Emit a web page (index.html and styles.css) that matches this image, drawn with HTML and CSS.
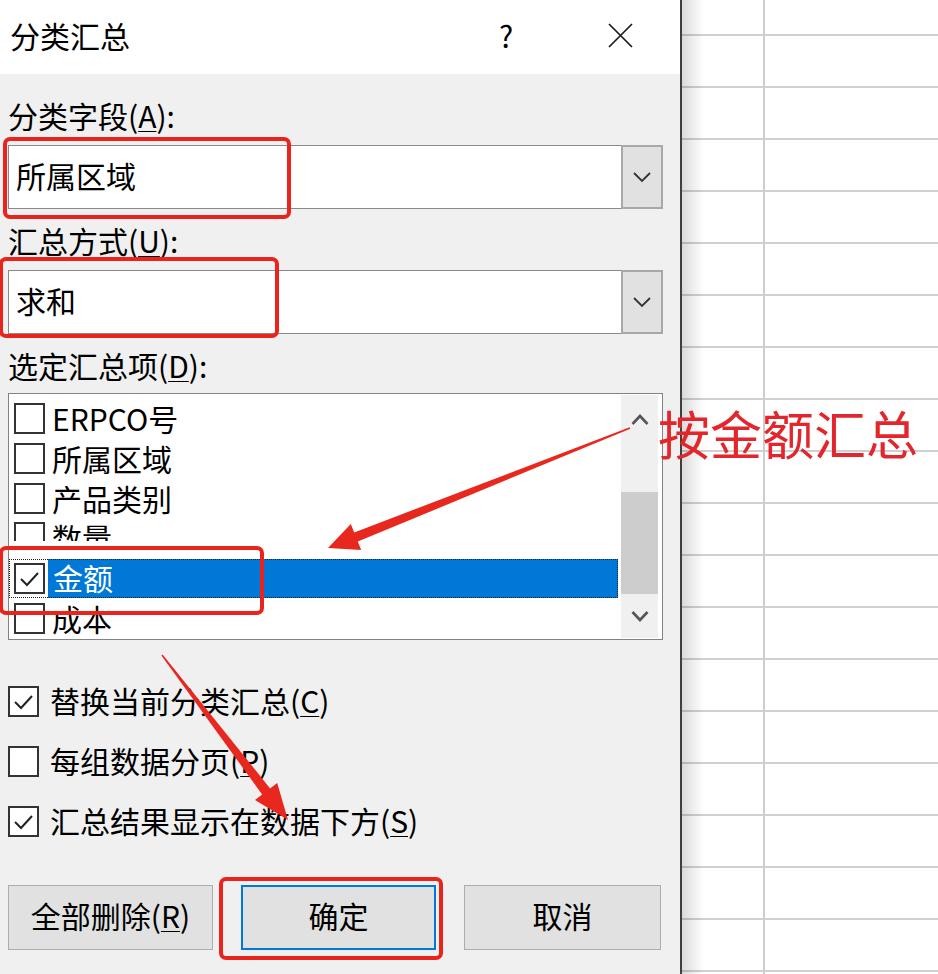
FILE: index.html
```html
<!DOCTYPE html>
<html lang="zh-CN">
<head>
  <meta charset="UTF-8">
  <title>分类汇总</title>
  <link rel="stylesheet" href="styles.css">
</head>
<body>

  <div class="screen">
    <div class="dialog">
      <div class="titlebar">
        <span class="title">分类汇总</span>
        <span class="help">?</span>
        <span class="close">
          <svg width="25" height="25" viewBox="0 0 25 25"><path d="M1 1L24 24M24 1L1 24" stroke="#1a1a1a" stroke-width="1.7" fill="none"/></svg>
        </span>
      </div>

      <div class="content">
        <div class="label first">分类字段(<u>A</u>):</div>
        <div class="combo">
          <span class="value">所属区域</span>
          <span class="drop"><svg width="18" height="12" viewBox="0 0 18 12"><path d="M1 2L9 10L17 2" stroke="#333" stroke-width="1.8" fill="none"/></svg></span>
        </div>

        <div class="label">汇总方式(<u>U</u>):</div>
        <div class="combo">
          <span class="value">求和</span>
          <span class="drop"><svg width="18" height="12" viewBox="0 0 18 12"><path d="M1 2L9 10L17 2" stroke="#333" stroke-width="1.8" fill="none"/></svg></span>
        </div>

        <div class="label">选定汇总项(<u>D</u>):</div>
        <div class="list">
          <div class="items">
            <div class="item"><span class="box"></span><span class="text">ERPCO号</span></div>
            <div class="item"><span class="box"></span><span class="text">所属区域</span></div>
            <div class="item"><span class="box"></span><span class="text">产品类别</span></div>
            <div class="item cut"><span class="box"></span><span class="text">数量</span></div>
            <div class="item current">
              <span class="box"><svg width="27" height="27" viewBox="0 0 27 27"><path d="M5 14L11 20L22 8" stroke="#222" stroke-width="2" fill="none"/></svg></span>
              <span class="text">金额</span>
            </div>
            <div class="item"><span class="box"></span><span class="text">成本</span></div>
          </div>
          <div class="scroll">
            <div class="arrow-up"><svg width="18" height="13" viewBox="0 0 18 13"><path d="M1.5 11L9 3L16.5 11" stroke="#555" stroke-width="2.6" fill="none"/></svg></div>
            <div class="track"><div class="thumb"></div></div>
            <div class="arrow-down"><svg width="18" height="13" viewBox="0 0 18 13"><path d="M1.5 2L9 10L16.5 2" stroke="#555" stroke-width="2.6" fill="none"/></svg></div>
          </div>
        </div>

        <div class="options">
          <div class="option">
            <span class="box"><svg width="27" height="27" viewBox="0 0 27 27"><path d="M5 14L11 20L22 8" stroke="#222" stroke-width="2" fill="none"/></svg></span>
            <span class="text">替换当前分类汇总(<u>C</u>)</span>
          </div>
          <div class="option">
            <span class="box"></span>
            <span class="text">每组数据分页(<u>P</u>)</span>
          </div>
          <div class="option">
            <span class="box"><svg width="27" height="27" viewBox="0 0 27 27"><path d="M5 14L11 20L22 8" stroke="#222" stroke-width="2" fill="none"/></svg></span>
            <span class="text">汇总结果显示在数据下方(<u>S</u>)</span>
          </div>
        </div>

        <div class="buttons">
          <button class="btn btn-clear">全部删除(<u>R</u>)</button>
          <button class="btn btn-ok">确定</button>
          <button class="btn btn-cancel">取消</button>
        </div>
      </div>
    </div>

    <div class="sheet"></div>

    <!-- marcações vermelhas por cima da captura -->
    <div class="mark mark-field"></div>
    <div class="mark mark-method"></div>
    <div class="mark mark-item"></div>
    <div class="mark mark-ok"></div>

    <svg class="arrows" width="938" height="974" viewBox="0 0 938 974">
      <polygon fill="#e8281e" points="630.3,428.7 357.8,541.6 361.2,550 328,548 350.8,524 354.2,532.4 629.7,427.3"/>
      <polygon fill="#e8281e" points="162.6,654.5 270.1,788.4 277.2,782.9 288,820 255,799.9 262.1,794.4 161.4,655.5"/>
    </svg>

    <div class="note">按金额汇总</div>
  </div>

</body>
</html>
```

FILE: styles.css
```css
body {
  margin: 0;
  font-family: "Noto Sans CJK SC", "Noto Sans", sans-serif;
  color: #000;
}
.screen {
  position: relative;
  display: flex;
  width: 938px;
  height: 974px;
  overflow: hidden;
  background: #fff;
}
.dialog {
  width: 680px;
  flex-shrink: 0;
  border-right: 2px solid #3f3f3f;
  background: #f0f0f0;
}
.titlebar {
  height: 74px;
  box-sizing: border-box;
  display: flex;
  align-items: center;
  padding: 0 30px 4px 10px;
  background: #fff;
  font-size: 30px;
}
.title {
  flex: 1;
}
.help {
  width: 40px;
  text-align: center;
  margin-right: 64px;
}
.close {
  width: 60px;
  display: flex;
  justify-content: center;
}
.content {
  padding: 0 17px 0 8px;
}
.label {
  font-size: 30px;
  line-height: 36px;
  margin-top: 13px;
}
.label.first {
  margin-top: 23px;
}
u {
  text-underline-offset: 3px;
  text-decoration-thickness: 1px;
}
.combo {
  margin-top: 12px;
  height: 64px;
  box-sizing: border-box;
  border: 1px solid #8a8a8a;
  background: #fff;
  display: flex;
}
.combo .value {
  flex: 1;
  padding-left: 7px;
  font-size: 30px;
  line-height: 58px;
}
.drop {
  width: 42px;
  box-sizing: border-box;
  margin: -1px -1px -1px 0;
  border: 2px solid #a8a8a8;
  background: #e1e1e1;
  display: flex;
  align-items: center;
  justify-content: center;
}
.list {
  margin-top: 10px;
  height: 247px;
  box-sizing: border-box;
  border: 1px solid #828282;
  background: #fff;
  display: flex;
}
.items {
  flex: 1;
  overflow: hidden;
  padding: 4px 3px 0 0;
}
.item {
  height: 40px;
  display: flex;
  align-items: center;
  padding-left: 5px;
  font-size: 30px;
}
.box {
  width: 31px;
  height: 31px;
  box-sizing: border-box;
  border: 2px solid #333;
  background: #fff;
  flex-shrink: 0;
  display: flex;
  align-items: center;
  justify-content: center;
}
.item .text {
  margin-left: 7px;
  line-height: 37px;
  white-space: nowrap;
}
/* linha "数量" aparece cortada na captura */
.item.cut {
  height: 23px;
  overflow: hidden;
  align-items: flex-start;
  margin-bottom: 18px;
}
.item.cut .box {
  margin-top: 4px;
}
.item.cut .text {
  line-height: 38px;
}
.item.current {
  height: 39px;
  outline: 1px dotted #222;
  outline-offset: -1px;
}
.item.current .text {
  flex: 1;
  align-self: stretch;
  margin-left: 3px;
  padding-left: 5px;
  line-height: 36px;
  background: #0078d7;
  color: #fff;
}
.scroll {
  width: 37px;
  margin: 1px 4px 1px 0;
  background: #f0f0f0;
  display: flex;
  flex-direction: column;
}
.arrow-up {
  height: 48px;
  display: flex;
  align-items: center;
  justify-content: center;
}
.track {
  flex: 1;
}
.thumb {
  margin-top: 49px;
  height: 102px;
  background: #cdcdcd;
}
.arrow-down {
  height: 44px;
  display: flex;
  align-items: center;
  justify-content: center;
}
.options {
  margin-top: 31px;
}
.option {
  height: 60px;
  display: flex;
  align-items: center;
  font-size: 30px;
}
.option .text {
  margin-left: 11px;
  line-height: 36px;
  padding-bottom: 3px;
}
.buttons {
  margin-top: 34px;
  display: flex;
  gap: 28px;
}
.btn {
  height: 65px;
  box-sizing: border-box;
  padding: 0 0 5px;
  border: 1px solid #adadad;
  background: #e1e1e1;
  font-family: inherit;
  font-size: 30px;
  color: #000;
}
.btn-clear {
  width: 205px;
}
.btn-ok {
  width: 195px;
  border: 2px solid #0078d7;
}
.btn-cancel {
  width: 197px;
}
.sheet {
  flex: 1;
  background:
    linear-gradient(to right, rgba(0,0,0,0.14), rgba(0,0,0,0) 22px),
    linear-gradient(#cdcdcd, #cdcdcd) 81px 0 / 2px 100% no-repeat,
    linear-gradient(to bottom, #d0d0d0 0, #d0d0d0 2px, transparent 2px) 0 34px / 100% 52px repeat-y,
    #fff;
}
.mark {
  position: absolute;
  box-sizing: border-box;
  border: 4px solid #e8241c;
  border-radius: 7px;
}
.mark-field {
  left: 3px;
  top: 137px;
  width: 288px;
  height: 82px;
}
.mark-method {
  left: -1px;
  top: 257px;
  width: 280px;
  height: 81px;
}
.mark-item {
  left: -1px;
  top: 546px;
  width: 265px;
  height: 69px;
}
.mark-ok {
  left: 219px;
  top: 877px;
  width: 224px;
  height: 83px;
}
.arrows {
  position: absolute;
  left: 0;
  top: 0;
}
.note {
  position: absolute;
  left: 658px;
  top: 407px;
  font-size: 52px;
  line-height: 52px;
  color: #e2262b;
  white-space: nowrap;
}
```
